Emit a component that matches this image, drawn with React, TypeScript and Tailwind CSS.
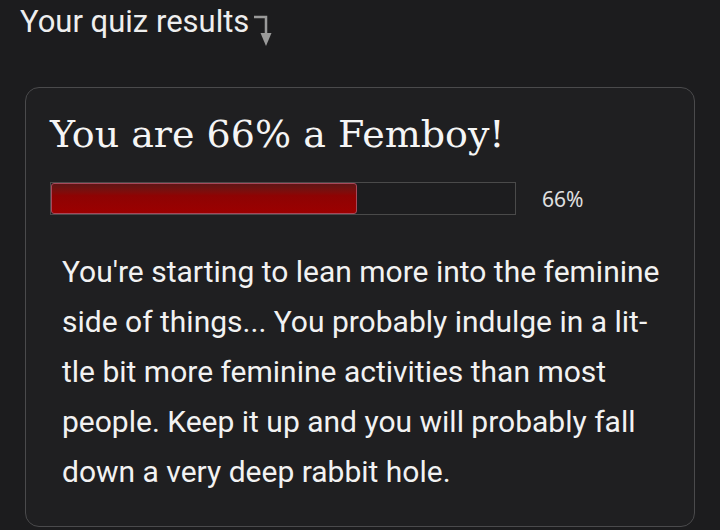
export default function App() {
  const percent = 66;

  return (
    <div className="min-h-[530px] w-[720px] bg-[#1c1c1e] px-[25px] pt-[2px] font-['Roboto',sans-serif]">
      <header className="flex h-[40px] items-start">
        <h1 className="-ml-[5px] text-[31px] leading-[40px] text-[#eeeeee]">Your quiz results</h1>
        <svg width="20" height="34" viewBox="0 0 20 34" className="ml-[3px] mt-[11px] shrink-0">
          <path d="M2 4 H14 V22" fill="none" stroke="#9a9a9a" strokeWidth="2.5" />
          <path d="M8.5 20 H19.5 L14 33 Z" fill="#9a9a9a" />
        </svg>
      </header>

      <section className="mt-[45px] rounded-[14px] border border-[#4a4a4c] bg-[#1f1f21] px-[24px] pt-[22px] pb-[29px]">
        <h2 className="font-['DejaVu_Serif',serif] text-[38px] leading-[48px] text-[#f5f5f5]">
          You are {percent}% a Femboy!
        </h2>

        <div className="mt-[24px] flex items-center">
          <div className="h-[33px] w-[466px] border border-[#4a4a4a] bg-[#1d1d1f]">
            <div
              className="h-full rounded-[3px] border border-[#a8485a] bg-gradient-to-b from-[#5e1414] via-[#8e0303] via-40% to-[#9c0000]"
              style={{ width: `${percent}%` }}
            />
          </div>
          <span className="ml-[26px] font-['Noto_Sans',sans-serif] text-[21px] leading-[30px] text-[#e0e0e0]">
            {percent}%
          </span>
        </div>

        <p className="mt-[32px] pl-[12px] text-[30px] leading-[50px] text-[#f2f2f2]">
          You're starting to lean more into the feminine side of things... You probably indulge in a lit{"\u00AD"}tle bit
          more feminine activities than most people. Keep it up and you will probably fall down a very deep rabbit
          hole.
        </p>
      </section>
    </div>
  );
}
